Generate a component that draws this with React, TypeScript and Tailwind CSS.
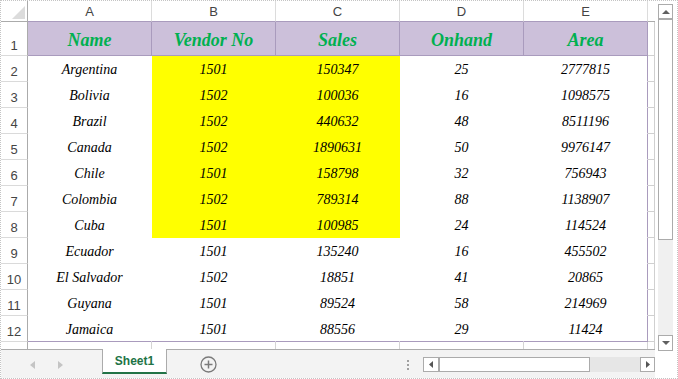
import React from "react";

type Row = [string, string, string, string, string];

const data: Row[] = [
  ["Argentina", "1501", "150347", "25", "2777815"],
  ["Bolivia", "1502", "100036", "16", "1098575"],
  ["Brazil", "1502", "440632", "48", "8511196"],
  ["Canada", "1502", "1890631", "50", "9976147"],
  ["Chile", "1501", "158798", "32", "756943"],
  ["Colombia", "1502", "789314", "88", "1138907"],
  ["Cuba", "1501", "100985", "24", "114524"],
  ["Ecuador", "1501", "135240", "16", "455502"],
  ["El Salvador", "1502", "18851", "41", "20865"],
  ["Guyana", "1501", "89524", "58", "214969"],
  ["Jamaica", "1501", "88556", "29", "11424"],
];

const headers = ["Name", "Vendor No", "Sales", "Onhand", "Area"];
const letters = ["A", "B", "C", "D", "E"];

const sans = { fontFamily: '"Liberation Sans", Arial, sans-serif' };
const serif = { fontFamily: '"Liberation Serif", "Times New Roman", serif' };

function RowHeader({ n, h }: { n: number; h: string }) {
  return (
    <div
      className={`w-[27px] shrink-0 ${h} border-r border-b border-r-[#ababab] border-b-[#dadada] flex items-end justify-center pb-[3px] text-[13px] text-[#444] leading-none`}
      style={sans}
    >
      {n}
    </div>
  );
}

export default function App() {
  return (
    <div className="w-[678px] h-[379px] border border-dotted border-[#c4c4c4] bg-white flex overflow-hidden">
      <div className="w-[654px] h-full flex flex-col">
        <div className="h-[348px] overflow-hidden flex flex-col">
          {/* column headers */}
          <div className="flex h-[21px] shrink-0">
            <div className="w-[27px] shrink-0 h-full border-r border-b border-[#ababab] relative">
              <svg className="absolute left-[11px] top-[5px]" width="13" height="13" viewBox="0 0 13 13">
                <polygon points="13,0 13,13 0,13" fill="#dcdcdc" />
              </svg>
            </div>
            {letters.map((l) => (
              <div
                key={l}
                className="w-[124px] shrink-0 h-full border-r border-b border-r-[#dcdcdc] border-b-[#a99bbd] flex items-center justify-center text-[13px] text-[#444] leading-none"
                style={sans}
              >
                {l}
              </div>
            ))}
            <div className="w-[7px] shrink-0 h-full border-b border-[#ababab]" />
          </div>
          {/* row 1 header row */}
          <div className="flex h-[34px] shrink-0">
            <RowHeader n={1} h="h-full" />
            {headers.map((t) => (
              <div
                key={t}
                className="w-[124px] shrink-0 h-full bg-[#ccc0da] border-r border-b border-[#a99bbd] flex items-center justify-center text-[18px] font-bold italic text-[#00b050] leading-none pt-[2px]"
                style={serif}
              >
                {t}
              </div>
            ))}
            <div className="w-[7px] shrink-0 h-full border-r border-b border-[#d0d0d0]" />
          </div>
          {data.map((r, i) => {
            const last = i === data.length - 1;
            return (
              <div key={i} className="flex h-[26px] shrink-0">
                <RowHeader n={i + 2} h="h-full" />
                {r.map((v, j) => {
                  const yellow = (j === 1 || j === 2) && i < 7;
                  const bg = yellow ? "bg-[#ffff00]" : "bg-white";
                  const br = j === 4 ? "border-r-[#a99bbd]" : "border-r-transparent";
                  const bb = last ? "border-b-[#a99bbd]" : "border-b-transparent";
                  return (
                    <div
                      key={j}
                      className={`w-[124px] shrink-0 h-full border-r border-b ${bg} ${br} ${bb} flex items-center justify-center text-[14px] italic text-black leading-none pt-[2px]`}
                      style={serif}
                    >
                      {v}
                    </div>
                  );
                })}
                <div className="w-[7px] shrink-0 h-full border-r border-b border-[#d0d0d0]" />
              </div>
            );
          })}
          {/* row 13 partial */}
          <div className="flex h-[26px] shrink-0">
            <RowHeader n={13} h="h-full" />
            {letters.map((l) => (
              <div key={l} className="w-[124px] shrink-0 h-full border-r border-[#d4d4d4]" />
            ))}
            <div className="w-[7px] shrink-0 h-full border-r border-[#d0d0d0]" />
          </div>
        </div>
        {/* tab bar */}
        <div className="h-[29px] flex bg-[#f3f3f3]">
          <div className="w-[101px] h-full border-t border-[#ababab] flex items-center pt-[1px]">
            <svg className="ml-[29px]" width="5" height="8" viewBox="0 0 5 8">
              <polygon points="5,0 5,8 0,4" fill="#c4c4c4" />
            </svg>
            <svg className="ml-[23px]" width="5" height="8" viewBox="0 0 5 8">
              <polygon points="0,0 0,8 5,4" fill="#c4c4c4" />
            </svg>
          </div>
          <div className="w-[65px] h-[25px] bg-white border-l border-r border-[#ababab] border-b-2 border-b-[#217346] flex items-center justify-center text-[12px] font-bold text-[#217346] leading-none pt-[1px]" style={sans}>
            Sheet1
          </div>
          <div className="flex-1 h-full border-t border-[#ababab] flex items-center">
            <svg className="ml-[33px] mt-[1px]" width="17" height="17" viewBox="0 0 17 17">
              <circle cx="8.5" cy="8.5" r="7.5" fill="none" stroke="#7a7a7a" strokeWidth="1.3" />
              <line x1="8.5" y1="4.5" x2="8.5" y2="12.5" stroke="#7a7a7a" strokeWidth="1.5" />
              <line x1="4.5" y1="8.5" x2="12.5" y2="8.5" stroke="#7a7a7a" strokeWidth="1.5" />
            </svg>
            <div className="flex-1" />
            <div className="flex flex-col gap-[2px] mr-[14px] mt-[1px]">
              <div className="w-[2px] h-[2px] bg-[#a0a0a0]" />
              <div className="w-[2px] h-[2px] bg-[#a0a0a0]" />
              <div className="w-[2px] h-[2px] bg-[#a0a0a0]" />
            </div>
            <div className="w-[232px] h-[15px] flex mt-[1px]">
              <div className="w-[16px] h-full border border-[#ababab] bg-white flex items-center justify-center">
                <svg width="4" height="7" viewBox="0 0 4 7">
                  <polygon points="4,0 4,7 0,3.5" fill="#555" />
                </svg>
              </div>
              <div className="w-[151px] h-full border border-[#ababab] bg-white" />
              <div className="flex-1 h-full bg-[#e6e6e6]" />
              <div className="w-[15px] h-full border border-[#ababab] bg-white flex items-center justify-center">
                <svg width="4" height="7" viewBox="0 0 4 7">
                  <polygon points="0,0 0,7 4,3.5" fill="#555" />
                </svg>
              </div>
            </div>
          </div>
        </div>
      </div>
      {/* vertical scrollbar */}
      <div className="w-[22px] h-full bg-white flex flex-col pl-[3px] pt-[3px]">
        <div className="w-[15px] flex flex-col">
          <div className="h-[15px] border border-[#ababab] bg-white flex items-center justify-center">
            <svg width="8" height="4" viewBox="0 0 8 4">
              <polygon points="0,4 8,4 4,0" fill="#606060" />
            </svg>
          </div>
          <div className="h-[221px] border border-[#ababab] bg-white" />
          <div className="h-[95px] bg-[#f0f0f0]" />
          <div className="h-[16px] border border-[#ababab] bg-white flex items-center justify-center">
            <svg width="8" height="4" viewBox="0 0 8 4">
              <polygon points="0,0 8,0 4,4" fill="#606060" />
            </svg>
          </div>
        </div>
      </div>
    </div>
  );
}
